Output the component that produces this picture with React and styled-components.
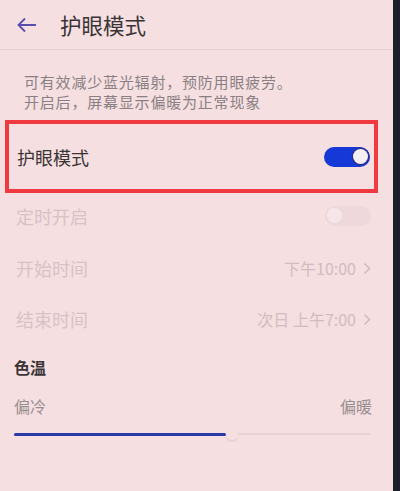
import styled, { createGlobalStyle } from "styled-components";

const Global = createGlobalStyle`
  html, body { margin: 0; padding: 0; }
  body {
    width: 400px;
    height: 491px;
    overflow: hidden;
    font-family: "Noto Sans CJK SC", "Noto Sans", sans-serif;
  }
`;

const Frame = styled.div`
  display: flex;
  width: 400px;
  height: 491px;
  background: #f5dfe1;
`;

const Screen = styled.div`
  flex: 1;
  display: flex;
  flex-direction: column;
`;

const Bezel = styled.div`
  width: 7px;
  background: #1b1f29;
`;

const Header = styled.header`
  display: flex;
  align-items: center;
  height: 50px;
  padding-left: 17px;
  border-bottom: 1px solid #e6cdd0;
  box-sizing: border-box;

  h1 {
    margin: 0 0 0 23px;
    font-size: 21.5px;
    font-weight: 400;
    color: #3a3436;
  }
`;

const Desc = styled.p`
  margin: 22px 0 0 24px;
  font-size: 15px;
  line-height: 20px;
  color: #8a8083;
  letter-spacing: 0.8px;
`;

const Highlight = styled.div`
  margin: 8px 15px 0 5px;
  height: 73px;
  border: 4px solid #ef3a3f;
  box-sizing: border-box;
  display: flex;
  align-items: center;
  justify-content: space-between;
  padding: 0 4px 0 8px;
`;

const Row = styled.div`
  display: flex;
  align-items: center;
  justify-content: space-between;
  height: ${p => p.h || 50}px;
  padding: 0 22px 0 ${p => (p.bold ? 14 : 16)}px;
`;

const Label = styled.span`
  font-size: ${p => (p.bold ? 16 : 18)}px;
  color: ${p => (p.faded ? "#d9c2c6" : "#3a3436")};
  font-weight: ${p => (p.bold ? 700 : 400)};
`;

const Value = styled.span`
  display: flex;
  align-items: center;
  gap: 7px;
  font-size: 16px;
  color: #d3bbbf;
`;

const Toggle = styled.div`
  width: 46px;
  height: 20px;
  border-radius: 10px;
  background: ${p => (p.on ? "#1538d6" : "#efd8dc")};
  display: flex;
  align-items: center;
  justify-content: ${p => (p.on ? "flex-end" : "flex-start")};
  padding: 0 2px;
  box-sizing: border-box;

  &::after {
    content: "";
    width: 15px;
    height: 15px;
    border-radius: 50%;
    background: ${p => (p.on ? "#f5eef2" : "#f7e6e9")};
    box-shadow: ${p => (p.on ? "0 0 0 1.5px #2d2f8f" : "none")};
  }
`;

const Ends = styled.div`
  display: flex;
  justify-content: space-between;
  padding: 0 21px 0 14px;
  font-size: 16px;
  color: #988e90;
`;

const Slider = styled.div`
  display: flex;
  align-items: center;
  margin: 10px 22px 0 14px;
  height: 12px;
`;

const Fill = styled.div`
  height: 3px;
  background: #2a3aa8;
  border-radius: 2px;
`;

const Thumb = styled.div`
  width: 12px;
  height: 10px;
  margin-top: 6px;
  border-radius: 0 0 6px 6px;
  border-bottom: 2px solid #e7d0d4;
  box-sizing: border-box;
`;

const Track = styled.div`
  flex: 1;
  height: 2px;
  background: #ead2d6;
`;

const Chevron = () => (
  <svg width="8" height="13" viewBox="0 0 8 13" fill="none">
    <path d="M1.5 1.5 L6.5 6.5 L1.5 11.5" stroke="#d3bbbf" strokeWidth="1.6" />
  </svg>
);

export default function App() {
  return (
    <>
      <Global />
      <Frame>
        <Screen>
          <Header>
            <svg width="20" height="16" viewBox="0 0 20 16" fill="none">
              <path d="M8 1.5 L1.5 8 L8 14.5 M1.5 8 H19" stroke="#5a4eb0" strokeWidth="1.8" />
            </svg>
            <h1>护眼模式</h1>
          </Header>
          <Desc>
            可有效减少蓝光辐射，预防用眼疲劳。
            <br />
            开启后，屏幕显示偏暖为正常现象
          </Desc>
          <Highlight>
            <Label>护眼模式</Label>
            <Toggle on />
          </Highlight>
          <Row h={45}>
            <Label faded>定时开启</Label>
            <Toggle />
          </Row>
          <Row h={60}>
            <Label faded>开始时间</Label>
            <Value>下午10:00 <Chevron /></Value>
          </Row>
          <Row h={42}>
            <Label faded>结束时间</Label>
            <Value>次日 上午7:00 <Chevron /></Value>
          </Row>
          <Row h={54} bold>
            <Label bold>色温</Label>
          </Row>
          <Ends>
            <span>偏冷</span>
            <span>偏暖</span>
          </Ends>
          <Slider>
            <Fill style={{ width: 212 }} />
            <Thumb />
            <Track />
          </Slider>
        </Screen>
        <Bezel />
      </Frame>
    </>
  );
}
